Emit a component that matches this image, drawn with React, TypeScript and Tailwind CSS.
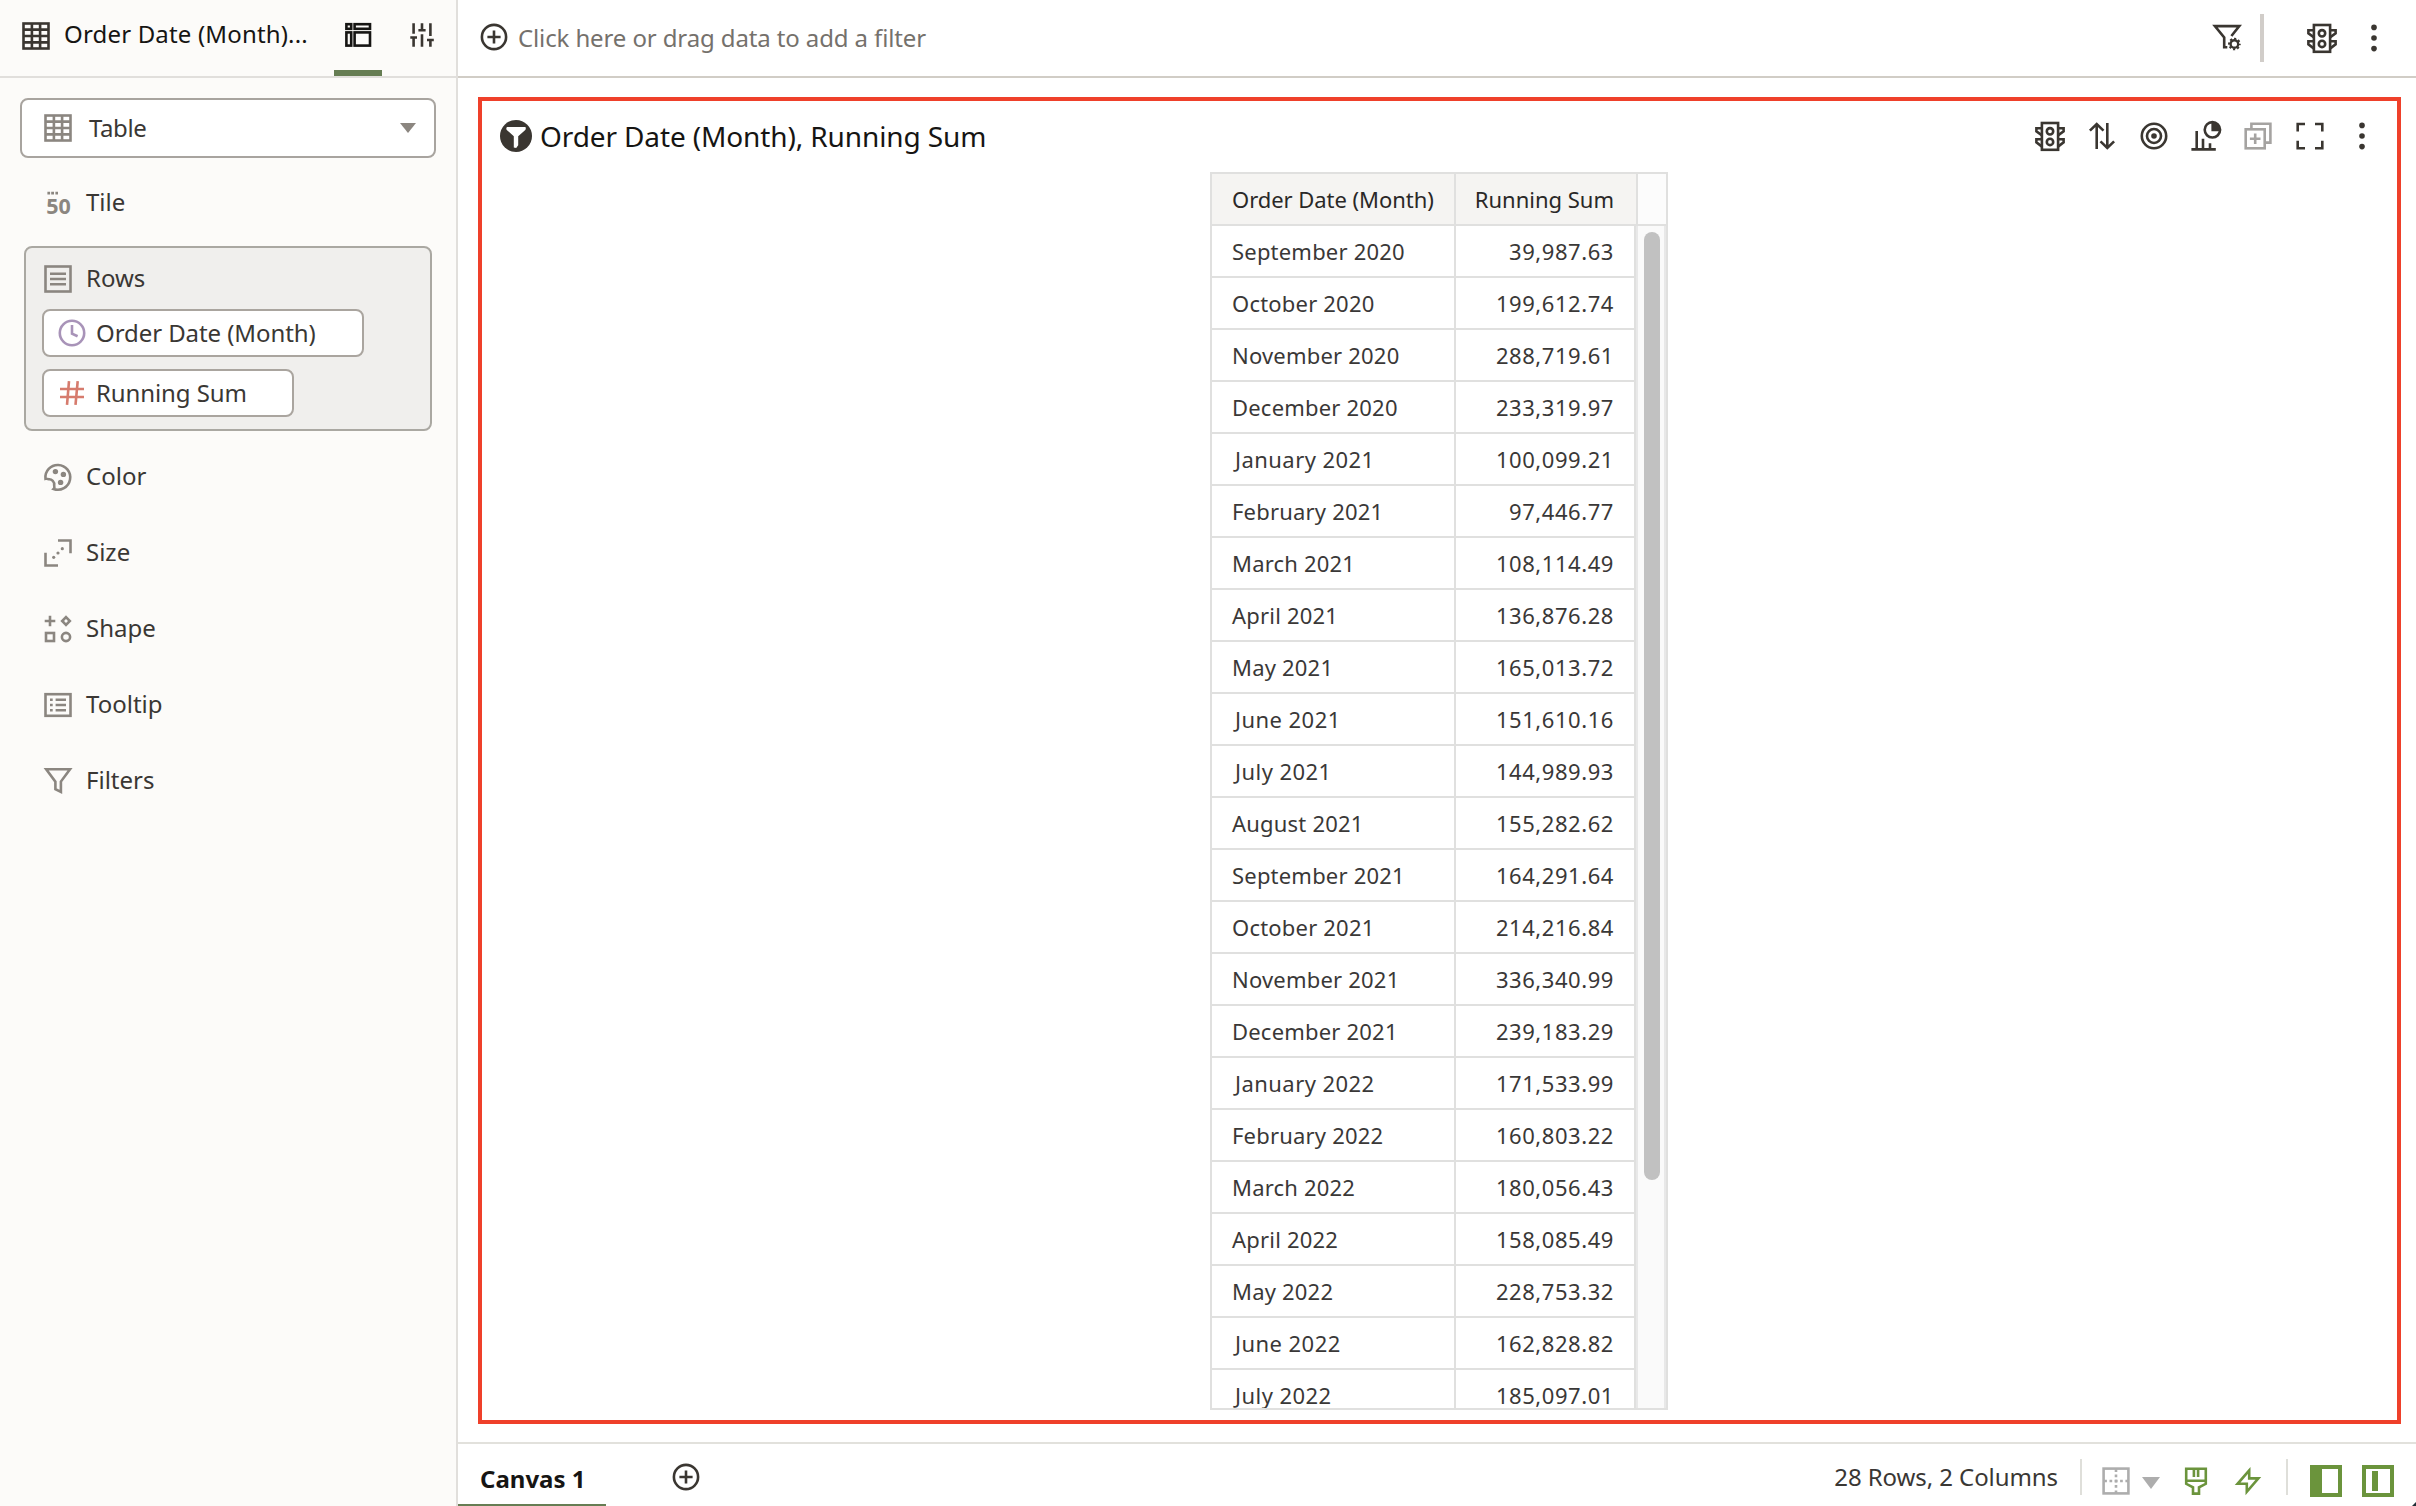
import type { ReactNode } from "react";

function Icon({ children, className = "" }: { children: ReactNode; className?: string }) {
  return (
    <svg
      width="32"
      height="32"
      viewBox="0 0 32 32"
      fill="none"
      stroke="currentColor"
      strokeWidth="2.6"
      className={`shrink-0 ${className}`}
    >
      {children}
    </svg>
  );
}

const TableIcon = ({ className }: { className?: string }) => (
  <Icon className={className}>
    <rect x="3.5" y="3.5" width="25" height="25" />
    <path d="M11.9 3.5V28.5M20.1 3.5V28.5M3.5 9.6H28.5M3.5 16H28.5M3.5 22.4H28.5" />
  </Icon>
);

const LayoutIcon = () => (
  <Icon className="text-[#161513]">
    <rect x="4.4" y="5.2" width="4.8" height="4.6" />
    <rect x="12.6" y="5.2" width="15.4" height="4.6" />
    <rect x="4.4" y="13.4" width="4.8" height="13.2" />
    <rect x="12.6" y="13.4" width="15.4" height="13.2" />
  </Icon>
);

const SlidersIcon = () => (
  <Icon className="text-[#3a3631]">
    <path d="M7.6 4.2V14.8M4.3 18.5H11M7.6 18.5V27.8M16 4.2V11M12.4 11.2H19.6M16 15.2V27.8M24.4 4.2V17M21 21H27.8M24.4 21V27.8" />
  </Icon>
);

const TileIcon = () => (
  <Icon>
    <path d="M5.4 6.2H8.1M9.2 6.2H12M13.4 6.2H16" strokeWidth="2.8" />
    <text
      x="16.6"
      y="26.6"
      textAnchor="middle"
      fontSize="21.5"
      fontWeight="700"
      fill="currentColor"
      stroke="none"
      className="font-['Noto_Sans',sans-serif]"
    >
      50
    </text>
  </Icon>
);

const RowsIcon = () => (
  <Icon>
    <rect x="3.5" y="3.5" width="25" height="25" />
    <path d="M8 10.7H24M8 16H24M8 21.3H24" />
  </Icon>
);

const ColorIcon = () => (
  <Icon>
    <path d="M3.5 17.8A12.4 12.4 0 1 1 11.6 28C12.9 26.8 12.6 25.8 12.2 24.6C12.8 20.6 9.6 18.2 7 18.3Q5.2 17.4 3.5 17.8Z" />
    <g fill="currentColor" stroke="none">
      <circle cx="13.4" cy="10.6" r="2.7" />
      <circle cx="21.4" cy="13.4" r="2.7" />
      <circle cx="18.6" cy="21.4" r="2.7" />
    </g>
  </Icon>
);

const SizeIcon = () => (
  <Icon>
    <path d="M16 3.5H28.5V16.2M3.5 15.8V28.5H16" />
    <g fill="currentColor" stroke="none">
      <circle cx="11.7" cy="20.3" r="1.6" />
      <circle cx="16" cy="16" r="1.6" />
      <circle cx="20.3" cy="11.7" r="1.6" />
    </g>
  </Icon>
);

const ShapeIcon = () => (
  <Icon>
    <path d="M8 2.7V13.3M2.7 8H13.3M24 4.2L27.8 8L24 11.8L20.2 8Z" />
    <rect x="4" y="20" width="8" height="8" />
    <circle cx="24" cy="24" r="4.1" />
  </Icon>
);

const TooltipIcon = () => (
  <Icon>
    <rect x="3.5" y="5.2" width="25" height="21.6" />
    <path d="M8 10.7H10.7M13.6 10.7H24M8 16H10.7M13.6 16H24M8 21.3H10.7M13.6 21.3H24" />
  </Icon>
);

const FilterIcon = () => (
  <Icon>
    <path d="M4.2 4.3H28L18.9 16.6V27L13.4 24.2V16.6Z" />
  </Icon>
);

const ClockIcon = () => (
  <Icon className="text-[#a893b8]">
    <circle cx="16" cy="16" r="12.2" />
    <path d="M16 8V16.6L21.6 19.2" />
  </Icon>
);

const HashIcon = () => (
  <Icon className="text-[#d67b6d]">
    <path d="M13 4.2L11 27.8M21.7 4.2L19.5 27.8M4 12H28M4 20H28" />
  </Icon>
);

const PlusCircleIcon = ({ className = "" }: { className?: string }) => (
  <Icon className={className}>
    <circle cx="16" cy="16" r="12.1" />
    <path d="M16 9.4V22.6M9.4 16H22.6" />
  </Icon>
);

const FilterBadgeIcon = () => (
  <Icon>
    <circle cx="16" cy="16" r="16" fill="#3a3631" stroke="none" />
    <path
      d="M7 7H25.4Q26.4 9 25 10.2L18.2 16.2V25.2L16.2 28L13.8 27.4V16.2L7 10.2Q5.6 8.8 7 7Z"
      fill="#fff"
      stroke="none"
    />
  </Icon>
);

const FilterGearIcon = () => (
  <Icon>
    <path d="M20.4 14L28.3 4.1H3.9L13.2 15.4V25.2H16.3" />
    <circle cx="23.4" cy="22" r="3.8" strokeWidth="2.4" />
    <circle cx="23.4" cy="22" r="5.4" strokeWidth="1.9" strokeDasharray="2.15 2.09" strokeDashoffset="1" />
  </Icon>
);

const TrafficIcon = () => (
  <Icon>
    <rect x="7.9" y="3" width="16.2" height="26.8" />
    <circle cx="16" cy="11.3" r="3.2" />
    <circle cx="16" cy="21.9" r="3.2" />
    <path d="M8 8.2H2.4V11.4L8 15.4M8 19.2H2.4V22.4L8 26.6M24 8.2H29.6V11.4L24 15.4M24 19.2H29.6V22.4L24 26.6" />
  </Icon>
);

const SortIcon = () => (
  <Icon>
    <path d="M10.7 29V4.4M3.9 10.6L10.7 4L17.5 10.6M21.3 3V27.8M14.5 21.4L21.3 28L28.1 21.4" />
  </Icon>
);

const TargetIcon = () => (
  <Icon>
    <circle cx="16" cy="16" r="12.2" />
    <circle cx="16" cy="16" r="7" />
    <circle cx="16" cy="16" r="2.8" fill="currentColor" stroke="none" />
  </Icon>
);

const ChartIcon = () => (
  <Icon>
    <path d="M1.4 29.4H25.8M6.7 29V11M13 29V18.8M20 29V23.2" />
    <circle cx="22.4" cy="9.8" r="7.7" />
    <path d="M21.4 2.4V11.2H30V9Q29 3 23 2Z" fill="currentColor" stroke="none" />
  </Icon>
);

const DuplicateIcon = () => (
  <Icon className="text-[#a5a3a1]">
    <rect x="3.7" y="9.3" width="19" height="19" />
    <path d="M9.4 9V3.7H28.4V22.6H23M13.2 13.4V24M7.9 18.7H18.5" />
  </Icon>
);

const ExpandIcon = () => (
  <Icon>
    <path d="M3.7 11.4V4H11M21 4H28.3V11.4M28.3 20.8V28.2H21M11 28.2H3.7V20.8" />
  </Icon>
);

const KebabIcon = () => (
  <Icon>
    <g fill="currentColor" stroke="none">
      <circle cx="16" cy="5.4" r="2.8" />
      <circle cx="16" cy="16" r="2.8" />
      <circle cx="16" cy="26.6" r="2.8" />
    </g>
  </Icon>
);

const GridIcon = ({ className = "" }: { className?: string }) => (
  <Icon className={className}>
    <rect x="3.6" y="3.6" width="24.8" height="24.8" />
    <path d="M16 4.2V28" strokeDasharray="2.7 2.6" />
    <path d="M4.2 16H28" strokeDasharray="2.7 2.6" />
  </Icon>
);

const BrushIcon = ({ className = "" }: { className?: string }) => (
  <Icon className={className}>
    <path d="M6.2 3.8H25.8V18.8L19 22.4V28.6H13V22.4L6.2 18.8ZM6.2 15.7H25.8M13.9 4V12M18.1 4V12" />
  </Icon>
);

const BoltIcon = ({ className = "" }: { className?: string }) => (
  <Icon className={className}>
    <path d="M17.2 5.4L5.6 18.8H14.8V26.8L26.4 13.4H17.2Z" />
  </Icon>
);

const items: [string, () => ReactNode][] = [
  ["Color", ColorIcon],
  ["Size", SizeIcon],
  ["Shape", ShapeIcon],
  ["Tooltip", TooltipIcon],
  ["Filters", FilterIcon],
];

const rows: [string, string][] = [
  ["September 2020", "39,987.63"],
  ["October 2020", "199,612.74"],
  ["November 2020", "288,719.61"],
  ["December 2020", "233,319.97"],
  ["January 2021", "100,099.21"],
  ["February 2021", "97,446.77"],
  ["March 2021", "108,114.49"],
  ["April 2021", "136,876.28"],
  ["May 2021", "165,013.72"],
  ["June 2021", "151,610.16"],
  ["July 2021", "144,989.93"],
  ["August 2021", "155,282.62"],
  ["September 2021", "164,291.64"],
  ["October 2021", "214,216.84"],
  ["November 2021", "336,340.99"],
  ["December 2021", "239,183.29"],
  ["January 2022", "171,533.99"],
  ["February 2022", "160,803.22"],
  ["March 2022", "180,056.43"],
  ["April 2022", "158,085.49"],
  ["May 2022", "228,753.32"],
  ["June 2022", "162,828.82"],
  ["July 2022", "185,097.01"],
];

function SidebarItem({ label, icon }: { label: string; icon: ReactNode }) {
  return (
    <div className="flex h-[76px] items-center gap-3 pl-[42px]">
      <span className="mt-0.5 flex text-[#8b8680]">{icon}</span>
      <span>{label}</span>
    </div>
  );
}

function Sidebar() {
  return (
    <aside className="flex w-[458px] shrink-0 flex-col border-r-2 border-[#e1dfdc] bg-[#fcfbf9]">
      <header className="flex h-[78px] shrink-0 border-b-2 border-[#e1dfdc] pl-5">
        <TableIcon className="mt-5 text-[#3a3631]" />
        <h1 className="mt-[18px] ml-3 w-[270px] leading-8 tracking-[0.17px] text-[#161513]">
          Order Date (Month)...
        </h1>
        <div className="flex w-12 flex-col items-center justify-between pt-[19px]">
          <LayoutIcon />
          <div className="h-1.5 w-full bg-[#667d53]" />
        </div>
        <div className="ml-6 pt-[19px]">
          <SlidersIcon />
        </div>
      </header>
      <div className="mx-5 mt-5 flex h-[60px] items-center rounded-lg border-2 border-[#a8a49f] bg-white pr-[18px] pl-5">
        <TableIcon className="text-[#8b8680]" />
        <span className="ml-[15px] flex-1 tracking-[-0.4px]">Table</span>
        <svg width="16" height="10" viewBox="0 0 16 10" fill="#8b8680">
          <path d="M0 0H16L8 10Z" />
        </svg>
      </div>
      <div className="mt-1.5">
        <SidebarItem label="Tile" icon={<TileIcon />} />
      </div>
      <section className="mx-6 mt-1.5 mb-[7px] flex h-[185px] w-[408px] flex-col items-start gap-3 rounded-lg border-2 border-[#aaa8a2] bg-[#f0efed] pl-4">
        <div className="flex h-[49px] items-center gap-3 pt-[11px]">
          <span className="mt-0.5 flex text-[#8b8680]">
            <RowsIcon />
          </span>
          <span>Rows</span>
        </div>
        <div className="flex h-12 w-[322px] shrink-0 items-center gap-2 rounded-lg border-2 border-[#aaa59f] bg-white pl-3">
          <ClockIcon />
          <span className="tracking-[-0.08px]">Order Date (Month)</span>
        </div>
        <div className="flex h-12 w-[252px] shrink-0 items-center gap-2 rounded-lg border-2 border-[#aaa59f] bg-white pl-3">
          <HashIcon />
          <span className="tracking-[-0.1px]">Running Sum</span>
        </div>
      </section>
      {items.map(([label, Glyph]) => (
        <SidebarItem key={label} label={label} icon={<Glyph />} />
      ))}
    </aside>
  );
}

function FilterBar() {
  return (
    <header className="flex h-[78px] shrink-0 items-center border-b-2 border-[#d1cdc6] pr-[26px] pl-5 text-[#3a3631]">
      <PlusCircleIcon className="mb-0.5" />
      <span className="ml-2 flex-1 tracking-[-0.12px] text-[#75716c]">
        Click here or drag data to add a filter
      </span>
      <FilterGearIcon />
      <div className="ml-[17px] h-12 w-1 bg-[#d1cdc9]" />
      <div className="ml-[42px] flex gap-5">
        <TrafficIcon />
        <KebabIcon />
      </div>
    </header>
  );
}

function DataTable() {
  return (
    <div className="mt-px ml-[728px] flex h-[1238px] w-[458px] flex-col overflow-hidden border-2 border-[#e0e0df] text-[22px] text-[#3a3837]">
      <div className="flex h-[52px] shrink-0 border-b-2 border-[#e0e0df] bg-[#f5f4f2] text-[#2a2827]">
        <div className="flex w-[244px] items-center border-r-2 border-[#e0e0df] pl-5 tracking-[-0.05px] whitespace-nowrap">
          Order Date (Month)
        </div>
        <div className="flex w-[182px] items-center justify-end border-r-2 border-[#e0e0df] pr-[22px]">
          Running Sum
        </div>
        <div className="flex-1 bg-[#fcfcfc]" />
      </div>
      <div className="flex min-h-0 flex-1">
        <div className="w-[424px] overflow-hidden bg-white">
          {rows.map(([month, sum]) => (
            <div key={month} className="flex h-[52px] border-b-2 border-[#e0e0df]">
              <div
                className={`flex w-[244px] items-center border-r-2 border-[#e0e0df] ${
                  month.startsWith("J") ? "pl-[23px] tracking-[0.45px]" : "pl-5 tracking-[0.2px]"
                }`}
              >
                {month}
              </div>
              <div className="flex w-[180px] items-center justify-end border-r-2 border-[#e0e0df] pr-5 tracking-[0.56px]">
                {sum}
              </div>
            </div>
          ))}
        </div>
        <div className="flex w-[30px] justify-center border-x-2 border-[#e8e8e8] bg-[#fafafa] pt-1.5">
          <div className="ml-0.5 h-[948px] w-4 rounded-full bg-[#c1c1c1]" />
        </div>
      </div>
    </div>
  );
}

function Footer() {
  return (
    <footer className="flex h-16 shrink-0 items-center border-t-2 border-[#e2e1dc] pr-[22px]">
      <div className="flex h-full w-[148px] items-center border-b-2 border-[#667d53] pt-[9px] pl-[22px] font-bold text-[#161513]">
        Canvas 1
      </div>
      <PlusCircleIcon className="mt-1 ml-16 text-[#3a3631]" />
      <span className="mt-[3px] ml-auto tracking-[-0.08px]">28 Rows, 2 Columns</span>
      <div className="mt-1 ml-[22px] h-9 w-0.5 bg-[#dfdfda]" />
      <GridIcon className="mt-3 ml-[18px] text-[#adadad]" />
      <svg width="18" height="12" viewBox="0 0 18 12" fill="#adadad" className="mt-4 ml-2.5">
        <path d="M0 0H18L9 12Z" />
      </svg>
      <BrushIcon className="mt-3 ml-5 text-[#6b943c]" />
      <BoltIcon className="mt-3 ml-5 text-[#6b943c]" />
      <div className="mt-1 ml-[22px] h-9 w-0.5 bg-[#dfdfda]" />
      <div className="mt-3 ml-[22px] size-8 border-4 border-l-[12px] border-[#6b943c]" />
      <div className="mt-3 ml-5 size-8 border-4 border-[#6b943c] py-0.5 pl-1.5">
        <div className="h-5 w-1.5 bg-[#6b943c]" />
      </div>
    </footer>
  );
}

export default function App() {
  return (
    <div className="relative flex h-[1506px] w-[2416px] overflow-hidden bg-white font-['Noto_Sans',sans-serif] text-[24px] leading-8 text-[#3a3734]">
      <Sidebar />
      <main className="flex min-w-0 flex-1 flex-col">
        <FilterBar />
        <section className="mt-[19px] mb-[18px] ml-5 w-[1923px] flex-1 border-4 border-[#ef402a]">
          <div className="flex h-[70px] items-center pr-[19px] pl-[18px] text-[#3a3631]">
            <FilterBadgeIcon />
            <h2 className="ml-2 flex-1 text-[28px] tracking-[-0.12px] text-[#161513]">
              Order Date (Month), Running Sum
            </h2>
            <div className="flex gap-5">
              <TrafficIcon />
              <SortIcon />
              <TargetIcon />
              <ChartIcon />
              <DuplicateIcon />
              <ExpandIcon />
              <KebabIcon />
            </div>
          </div>
          <DataTable />
        </section>
        <Footer />
      </main>
      <div className="absolute right-0 bottom-0 size-1 bg-[#1f2d36] [clip-path:polygon(100%_0,100%_100%,0_100%)]" />
    </div>
  );
}
